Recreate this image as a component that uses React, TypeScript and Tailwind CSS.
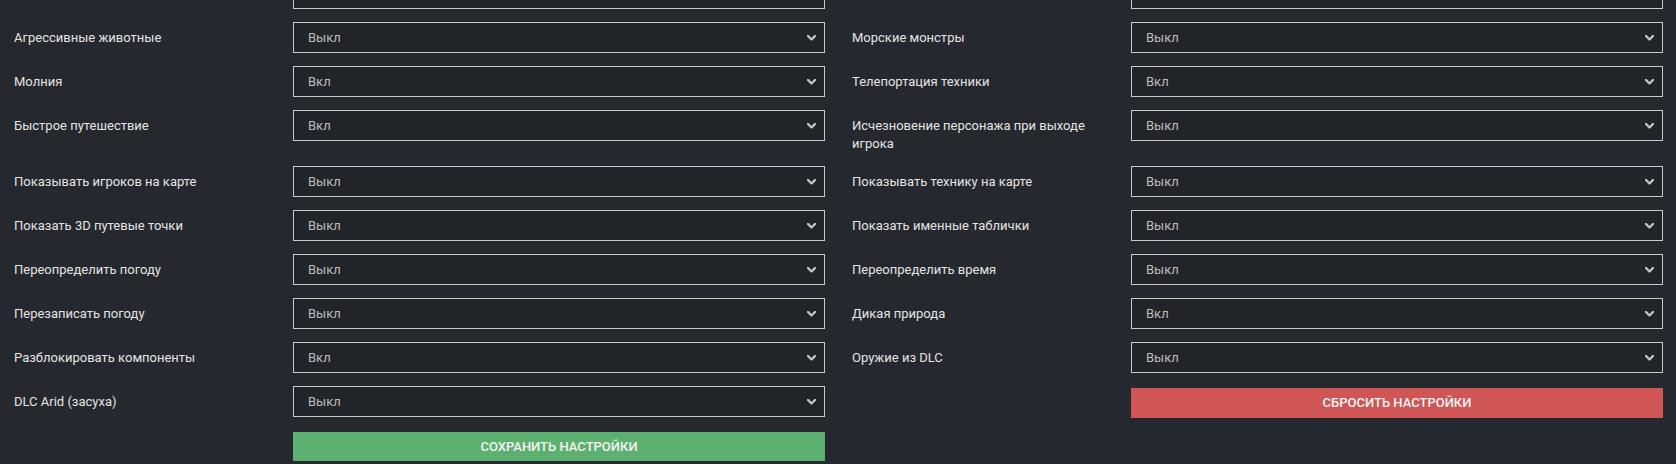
import React from "react";

type Opt = "Вкл" | "Выкл";

type Field = { label: string; value: Opt };

// first pair sits above the fold, only its selects peek in
const rows: [Field, Field][] = [
  [
    { label: "", value: "Выкл" },
    { label: "", value: "Вкл" },
  ],
  [
    { label: "Агрессивные животные", value: "Выкл" },
    { label: "Морские монстры", value: "Выкл" },
  ],
  [
    { label: "Молния", value: "Вкл" },
    { label: "Телепортация техники", value: "Вкл" },
  ],
  [
    { label: "Быстрое путешествие", value: "Вкл" },
    { label: "Исчезновение персонажа при выходе игрока", value: "Выкл" },
  ],
  [
    { label: "Показывать игроков на карте", value: "Выкл" },
    { label: "Показывать технику на карте", value: "Выкл" },
  ],
  [
    { label: "Показать 3D путевые точки", value: "Выкл" },
    { label: "Показать именные таблички", value: "Выкл" },
  ],
  [
    { label: "Переопределить погоду", value: "Выкл" },
    { label: "Переопределить время", value: "Выкл" },
  ],
  [
    { label: "Перезаписать погоду", value: "Выкл" },
    { label: "Дикая природа", value: "Вкл" },
  ],
  [
    { label: "Разблокировать компоненты", value: "Вкл" },
    { label: "Оружие из DLC", value: "Выкл" },
  ],
];

function Select({ value }: { value: Opt }) {
  return (
    <div className="relative flex-1">
      <select
        defaultValue={value}
        className="w-full h-[31px] appearance-none bg-[#212429] border border-[#c9c9c9] rounded-none pl-[14px] pr-8 text-[13px] text-[#bdbdbd] outline-none"
      >
        <option value="Вкл">Вкл</option>
        <option value="Выкл">Выкл</option>
      </select>
      {/* chevron */}
      <svg
        width="9"
        height="6"
        viewBox="0 0 9 6"
        className="pointer-events-none absolute right-[9px] top-[13px]"
      >
        <polyline
          points="1,1 4.5,4.5 8,1"
          fill="none"
          stroke="#c4c4c4"
          strokeWidth="2.4"
          strokeLinecap="round"
          strokeLinejoin="round"
        />
      </svg>
    </div>
  );
}

function FieldRow({ field }: { field: Field }) {
  return (
    <div className="flex items-start">
      <label className="w-[279px] shrink-0 pt-[7px] pr-[24px] text-[13px] leading-[18px] text-[#e4e4e4]">
        {field.label}
      </label>
      <Select value={field.value} />
    </div>
  );
}

export default function App() {
  return (
    <div
      className="min-h-screen h-[464px] overflow-hidden bg-[#25282e] pl-[14px] pr-[13px]"
      style={{ fontFamily: "Roboto, 'Noto Sans', sans-serif" }}
    >
      <div className="mt-[-22px] flex flex-col">
        {rows.map(([left, right], i) => (
          <div key={i} className="grid grid-cols-2 gap-x-[27px] items-start mb-[13px]">
            <FieldRow field={left} />
            <FieldRow field={right} />
          </div>
        ))}

        {/* last row: DLC + reset */}
        <div className="grid grid-cols-2 gap-x-[27px] items-start mb-[13px]">
          <FieldRow field={{ label: "DLC Arid (засуха)", value: "Выкл" }} />
          <div className="flex">
            <div className="w-[279px] shrink-0" />
            <button className="flex-1 mt-[2px] h-[30px] bg-[#d05656] text-[13px] font-medium uppercase text-[#f4f4f4]">
              Сбросить настройки
            </button>
          </div>
        </div>

        {/* save */}
        <div className="grid grid-cols-2 gap-x-[27px]">
          <div className="flex">
            <div className="w-[279px] shrink-0" />
            <button className="flex-1 mt-[1px] h-[29px] bg-[#5cb170] text-[13px] font-medium uppercase text-[#f4f4f4]">
              Сохранить настройки
            </button>
          </div>
          <div />
        </div>
      </div>
    </div>
  );
}
